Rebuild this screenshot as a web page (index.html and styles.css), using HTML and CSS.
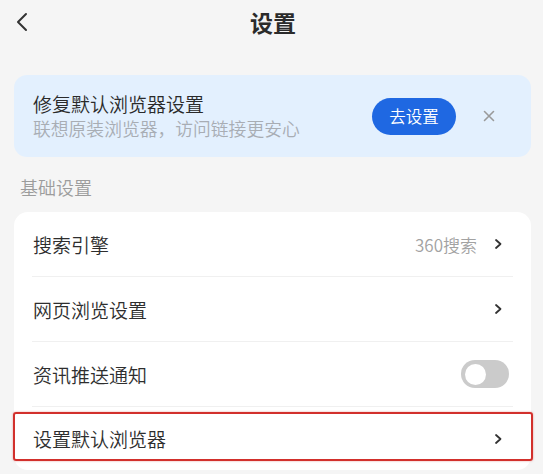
FILE: index.html
```html
<!DOCTYPE html>
<html lang="zh-CN">
<head>
<meta charset="utf-8">
<title>设置</title>
<link rel="stylesheet" href="styles.css">
</head>
<body>
<div class="page">
  <header class="topbar">
    <svg class="back" width="14" height="20" viewBox="0 0 14 20"><path d="M11 2 L3 10 L11 18" fill="none" stroke="#333" stroke-width="2" stroke-linecap="round" stroke-linejoin="round"/></svg>
    <h1 class="title">设置</h1>
  </header>

  <section class="banner">
    <div class="banner-text">
      <div class="banner-title">修复默认浏览器设置</div>
      <div class="banner-sub">联想原装浏览器，访问链接更安心</div>
    </div>
    <button class="banner-btn">去设置</button>
    <svg class="close" width="12" height="12" viewBox="0 0 12 12"><path d="M1.5 1.5 L10.5 10.5 M10.5 1.5 L1.5 10.5" stroke="#9a9a9a" stroke-width="1.6" stroke-linecap="round"/></svg>
  </section>

  <div class="section-label">基础设置</div>

  <section class="card">
    <div class="row">
      <span class="row-label">搜索引擎</span>
      <span class="row-value">360搜索</span>
      <svg class="chev" width="12" height="12" viewBox="0 0 12 12"><path d="M4 2 L8.5 6 L4 10" fill="none" stroke="#333" stroke-width="1.8" stroke-linecap="round" stroke-linejoin="round"/></svg>
    </div>
    <div class="row">
      <span class="row-label">网页浏览设置</span>
      <svg class="chev" width="12" height="12" viewBox="0 0 12 12"><path d="M4 2 L8.5 6 L4 10" fill="none" stroke="#333" stroke-width="1.8" stroke-linecap="round" stroke-linejoin="round"/></svg>
    </div>
    <div class="row">
      <span class="row-label">资讯推送通知</span>
      <span class="toggle"><span class="knob"></span></span>
    </div>
    <div class="row row-highlight">
      <span class="row-label">设置默认浏览器</span>
      <svg class="chev" width="12" height="12" viewBox="0 0 12 12"><path d="M4 2 L8.5 6 L4 10" fill="none" stroke="#333" stroke-width="1.8" stroke-linecap="round" stroke-linejoin="round"/></svg>
      <span class="highlight-box"></span>
    </div>
  </section>
</div>
</body>
</html>
```

FILE: styles.css
```css
* { box-sizing: border-box; }
html, body {
  margin: 0;
  padding: 0;
  background: #f5f5f5;
  font-family: "Noto Sans CJK SC", "Noto Sans", "Liberation Sans", sans-serif;
  font-weight: 350;
  color: #333;
}
.page {
  width: 543px;
  height: 474px;
  overflow: hidden;
}
.topbar {
  position: relative;
  height: 44px;
  display: flex;
  align-items: center;
  justify-content: center;
}
.back {
  position: absolute;
  left: 15px;
  top: 12px;
}
.title {
  margin: 0;
  font-size: 23px;
  font-weight: 700;
  line-height: 44px;
  color: #2b2b2b;
  padding-left: 3px;
}
.banner {
  margin: 31px 12px 0 14px;
  height: 82px;
  background: #e3f0fe;
  border-radius: 13px;
  display: flex;
  align-items: center;
  padding: 0 36px 0 19px;
}
.banner-text {
  flex: 1;
  display: flex;
  flex-direction: column;
}
.banner-title {
  font-size: 19px;
  line-height: 24px;
  color: #2a2a2a;
}
.banner-sub {
  font-size: 17.8px;
  line-height: 24px;
  color: #a8adb4;
}
.banner-btn {
  width: 84px;
  height: 37px;
  border: none;
  border-radius: 19px;
  background: #1f68e2;
  color: #fff;
  font-family: inherit;
  font-weight: 350;
  font-size: 16.5px;
  padding: 0;
  margin-right: 27px;
}
.close { display: block; }
.section-label {
  margin: 18px 0 13px 20px;
  font-size: 18px;
  line-height: 24px;
  color: #9c9c9c;
}
.card {
  margin: 0 12px 0 14px;
  background: #fff;
  border-radius: 14px;
  padding: 0 18px;
}
.row {
  position: relative;
  height: 65px;
  display: flex;
  align-items: center;
  border-bottom: 1px solid #f0f0f0;
}
.row:last-child { border-bottom: none; height: 63px; }
.row-label {
  flex: 1;
  font-size: 19px;
  color: #2e2e2e;
  padding-left: 1px;
}
.row-value {
  font-size: 17px;
  color: #a2a2a2;
  margin-right: 15px;
}
.chev {
  display: block;
  margin-right: 9px;
}
.toggle {
  width: 48px;
  height: 28px;
  border-radius: 14px;
  background: #cbcbcb;
  margin-right: 4px;
  display: flex;
  align-items: center;
  padding-left: 4px;
}
.knob {
  width: 21px;
  height: 21px;
  border-radius: 50%;
  background: #fff;
}
.highlight-box {
  position: absolute;
  left: -19px;
  right: -20px;
  top: 5px;
  height: 49px;
  border: 2px solid #d2302c;
  border-radius: 3px;
  box-shadow: 0 0 2px rgba(210, 48, 44, 0.5);
  pointer-events: none;
}
```
